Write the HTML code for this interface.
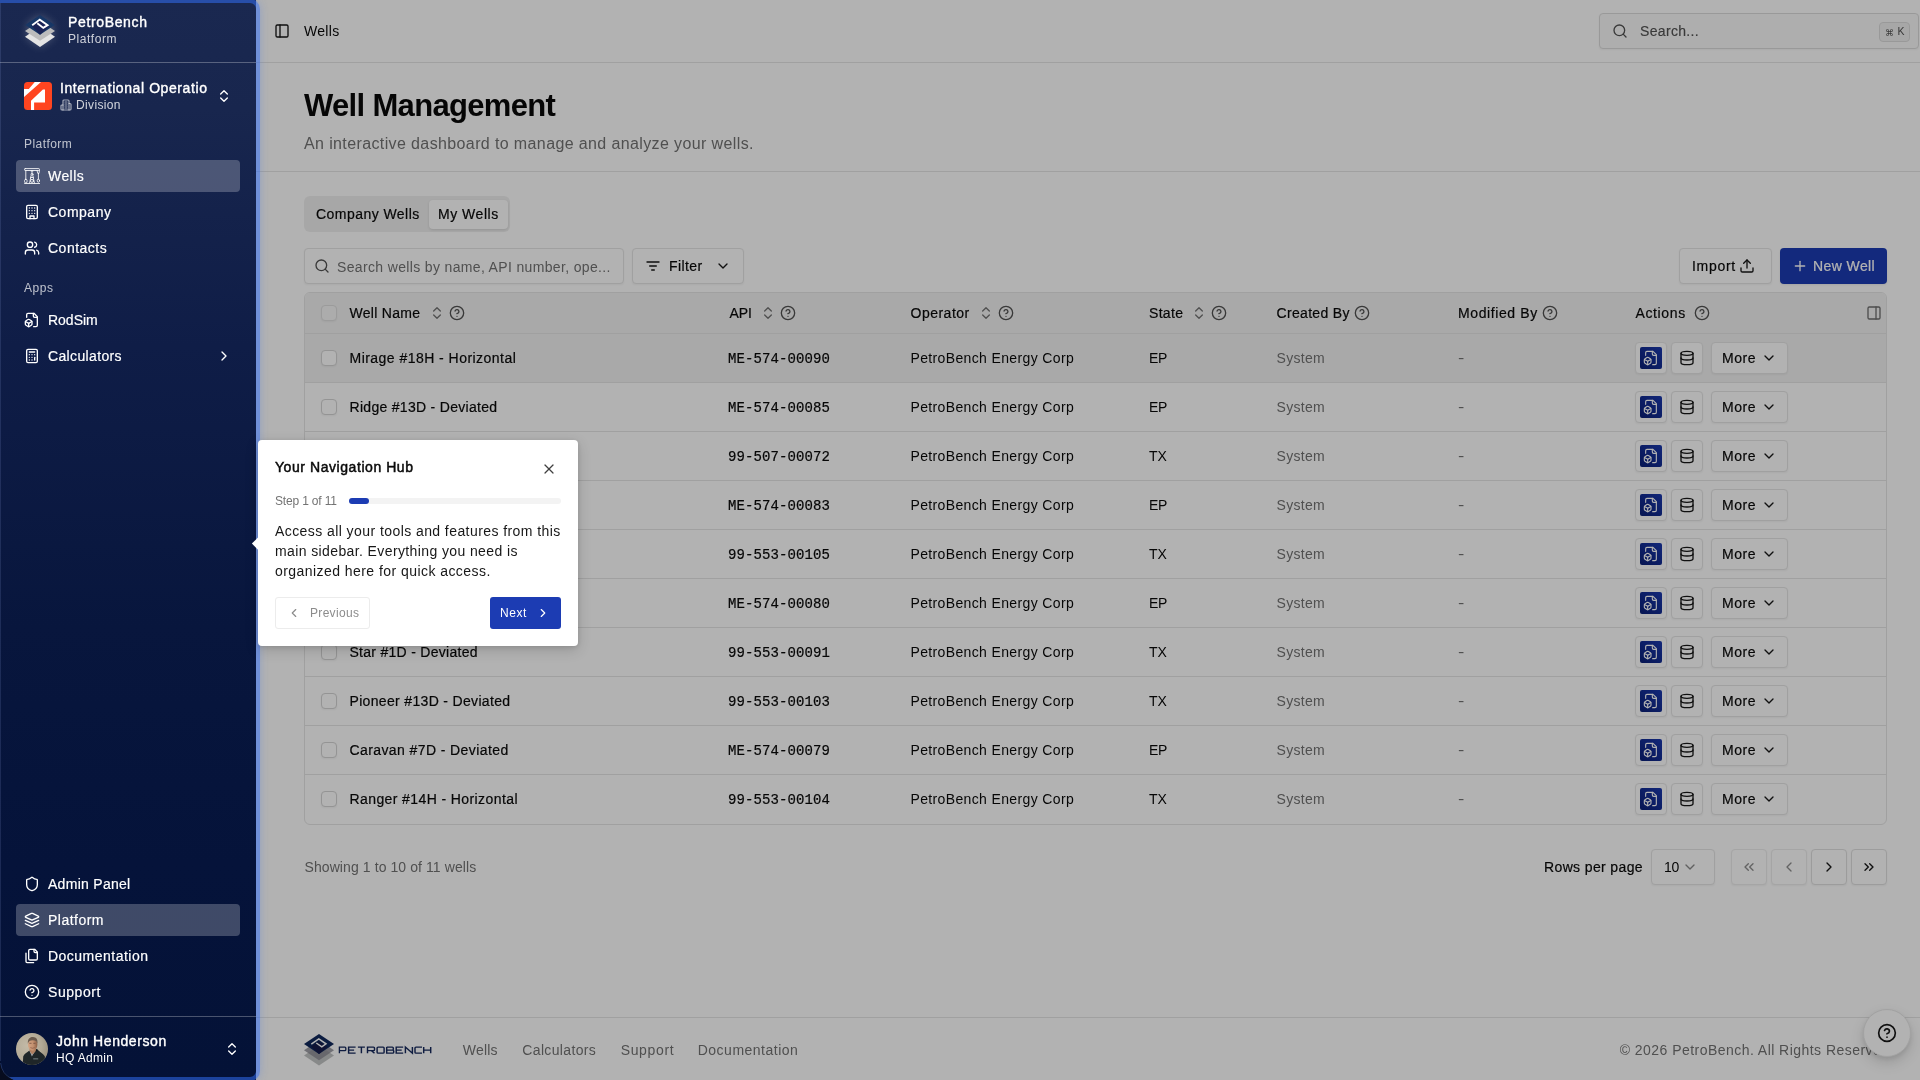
<!DOCTYPE html>
<html lang="en">
<head>
<meta charset="utf-8">
<title>PetroBench - Wells</title>
<style>
*{box-sizing:border-box;margin:0;padding:0}
html,body{width:1920px;height:1080px;overflow:hidden;background:#fff}
body{font-family:"Liberation Sans",sans-serif;color:#0a0a0a;position:relative;font-size:14px}
.abs{position:absolute}
.t{position:absolute;white-space:nowrap;line-height:1}
.t,.th,.c{opacity:.999}
svg{display:block}
.ic{position:absolute;fill:none;stroke:currentColor;stroke-width:2;stroke-linecap:round;stroke-linejoin:round}
/* ---------- sidebar ---------- */
#sb{position:absolute;left:0;top:0;width:256px;height:1080px;background:linear-gradient(180deg,#1a2850 0%,#18264e 10%,#0f1d47 32%,#08163d 58%,#05133a 80%,#041237 100%);color:#fff;z-index:30}
#sb .hr{position:absolute;left:0;width:256px;height:1px;background:rgba(255,255,255,.28)}
#sb .nav{position:absolute;left:16px;width:224px;height:32px;border-radius:4px}
#sb .nav.on{background:rgba(255,255,255,.235)}
#sb .nav .ic{left:8px;top:8px;width:16px;height:16px;color:#fff}
#sb .nav .t{left:32px;top:8px;font-size:14px;line-height:16px;color:#fff;-webkit-text-stroke:.18px #fff}
#sb .lbl{font-size:12px;color:rgba(255,255,255,.72)}
/* ---------- main ---------- */
#main{position:absolute;left:0;top:0;width:1920px;height:1080px;background:#fff}
.hline{position:absolute;left:256px;width:1664px;height:1px;background:#e5e5e5}
.g{color:#737373}
.mono{font-family:"Liberation Mono",monospace}
.th{position:absolute;top:305px;font-size:14px;line-height:16px;white-space:nowrap;color:#0a0a0a;-webkit-text-stroke:.2px #0a0a0a}
.hic{position:absolute;top:305px;width:16px;height:16px;fill:none;stroke:#525252;stroke-width:2;stroke-linecap:round;stroke-linejoin:round}
.row{position:absolute;left:305px;width:1581px;height:49px;border-bottom:1px solid #e5e5e5}
.row .c{position:absolute;top:16px;font-size:14px;line-height:16px;white-space:nowrap}
.cb{position:absolute;left:16px;top:16px;width:16px;height:16px;border:1px solid #d4d4d4;border-radius:4px;background:#fff;box-shadow:0 1px 2px rgba(0,0,0,.05)}
.ab{position:absolute;top:8px;height:32px;border:1px solid #e5e5e5;border-radius:4px;background:#fff;box-shadow:0 1px 2px rgba(0,0,0,.05)}

.btn{position:absolute;border:1px solid #e5e5e5;border-radius:4px;background:#fff;box-shadow:0 1px 2px rgba(0,0,0,.05)}
/* ---------- overlay ---------- */
#dim{position:absolute;left:0;top:0;width:1920px;height:1080px;background:rgba(0,0,0,.302);z-index:20;pointer-events:none}
#ring{position:absolute;left:-14px;top:-1px;width:274px;height:1082px;border:4px solid rgba(51,113,251,.52);border-radius:10px;box-shadow:0 0 9px rgba(70,120,240,.30);z-index:40;pointer-events:none}
#pop{position:absolute;left:258px;top:440px;width:320px;height:206px;background:#fff;border-radius:4px;z-index:50;box-shadow:0 4px 14px rgba(0,0,0,.16),0 1px 4px rgba(0,0,0,.10)}
</style>
</head>
<body>

<!-- ================= MAIN ================= -->
<div id="main">
<svg class="ic" style="left:274px;top:23px;width:16px;height:16px;color:#171717" viewBox="0 0 24 24"><rect width="18" height="18" x="3" y="3" rx="2"/><path d="M9 3v18"/></svg>
<div class="t" style="left:304px;top:23px;font-size:14px;line-height:16px;letter-spacing:0.308px">Wells</div>
<div class="abs" style="left:1599px;top:13px;width:320px;height:36px;border:1px solid #dcdcdc;border-radius:4px;background:#fafafa;box-shadow:0 1px 2px rgba(0,0,0,.05)"></div>
<svg class="ic" style="left:1612px;top:23px;width:16px;height:16px;color:#525252" viewBox="0 0 24 24"><circle cx="11" cy="11" r="8"/><path d="m21 21-4.3-4.3"/></svg>
<div class="t" style="left:1640px;top:23px;font-size:14px;line-height:16px;color:#525252;-webkit-text-stroke:.15px #525252;letter-spacing:0.334px">Search...</div>
<div class="abs" style="left:1879px;top:22px;width:31px;height:20px;border:1px solid #dcdcdc;border-radius:4px;background:#f0f0f0"></div>
<div class="t" style="left:1885px;top:26.5px;font-size:9px;line-height:12px;color:#525252">&#8984;</div>
<div class="t" style="left:1897.5px;top:25px;font-size:10.5px;line-height:12px;color:#525252">K</div>
<div class="hline" style="top:62px"></div>
<div class="t" style="left:304px;top:90px;font-size:31px;line-height:32px;font-weight:bold;color:#0a0a0a;letter-spacing:-0.669px">Well Management</div>
<div class="t g" style="left:304px;top:135px;font-size:16px;line-height:18px;letter-spacing:0.380px">An interactive dashboard to manage and analyze your wells.</div>
<div class="hline" style="top:171px"></div>
<div class="abs" style="left:304px;top:196px;width:206px;height:36px;border-radius:6px;background:#f0f0f0"></div>
<div class="abs" style="left:429px;top:200px;width:79px;height:29px;border-radius:4px;background:#fff;box-shadow:0 1px 3px rgba(0,0,0,.12)"></div>
<div class="t" style="left:316px;top:206px;font-size:14px;line-height:16px;-webkit-text-stroke:.2px #0a0a0a;letter-spacing:0.452px">Company Wells</div>
<div class="t" style="left:438px;top:206px;font-size:14px;line-height:16px;-webkit-text-stroke:.2px #0a0a0a;letter-spacing:0.524px">My Wells</div>
<div class="btn" style="left:304px;top:248px;width:320px;height:36px"></div>
<svg class="ic" style="left:314px;top:258px;width:16px;height:16px;color:#525252" viewBox="0 0 24 24"><circle cx="11" cy="11" r="8"/><path d="m21 21-4.3-4.3"/></svg>
<div class="t g" style="left:337px;top:259px;font-size:14px;line-height:16px;letter-spacing:0.348px">Search wells by name, API number, ope...</div>
<div class="btn" style="left:632px;top:248px;width:112px;height:36px"></div>
<svg class="ic" style="left:645px;top:258px;width:16px;height:16px;color:#171717" viewBox="0 0 24 24"><path d="M3 6h18"/><path d="M7 12h10"/><path d="M10 18h4"/></svg>
<div class="t" style="left:669px;top:258px;font-size:14px;line-height:16px;-webkit-text-stroke:.2px #0a0a0a;letter-spacing:0.415px">Filter</div>
<svg class="ic" style="left:715px;top:258px;width:16px;height:16px;color:#171717" viewBox="0 0 24 24"><path d="m6 9 6 6 6-6"/></svg>
<div class="btn" style="left:1679px;top:248px;width:93px;height:36px"></div>
<div class="t" style="left:1692px;top:258px;font-size:14px;line-height:16px;-webkit-text-stroke:.2px #0a0a0a;letter-spacing:0.703px">Import</div>
<svg class="ic" style="left:1739px;top:258px;width:16px;height:16px;color:#171717" viewBox="0 0 24 24"><path d="M21 15v4a2 2 0 0 1-2 2H5a2 2 0 0 1-2-2v-4"/><polyline points="17 8 12 3 7 8"/><line x1="12" x2="12" y1="3" y2="15"/></svg>
<div class="abs" style="left:1780px;top:248px;width:107px;height:36px;border-radius:4px;background:#1c3cb3;box-shadow:0 1px 2px rgba(0,0,0,.08)"></div>
<svg class="ic" style="left:1792px;top:258px;width:16px;height:16px;color:#fff" viewBox="0 0 24 24"><path d="M5 12h14"/><path d="M12 5v14"/></svg>
<div class="t" style="left:1813px;top:258px;font-size:14px;line-height:16px;color:#fff;-webkit-text-stroke:.2px #fff;letter-spacing:0.404px">New Well</div>
<div class="abs" style="left:304px;top:292px;width:1583px;height:533px;border:1px solid #e5e5e5;border-radius:6px;background:#fff"></div>
<div class="abs" style="left:305px;top:293px;width:1581px;height:41px;background:#f3f3f3;border-bottom:1px solid #e5e5e5;border-radius:5px 5px 0 0"></div>
<div class="cb" style="left:321px;top:305px;background:#f6f6f6;border-color:#dedede"></div>
<div class="th" style="left:349.5px;letter-spacing:0.281px">Well Name</div>
<svg class="hic" style="left:429px;stroke:#737373" viewBox="0 0 24 24"><path d="m7 15 5 5 5-5"/><path d="m7 9 5-5 5 5"/></svg>
<svg class="hic" style="left:449px" viewBox="0 0 24 24"><circle cx="12" cy="12" r="10"/><path d="M9.090 9a3 3 0 0 1 5.830 1c0 2-3 3-3 3"/><path d="M12 17h.01"/></svg>
<div class="th" style="left:729.5px;letter-spacing:-0.064px">API</div>
<svg class="hic" style="left:760px;stroke:#737373" viewBox="0 0 24 24"><path d="m7 15 5 5 5-5"/><path d="m7 9 5-5 5 5"/></svg>
<svg class="hic" style="left:780px" viewBox="0 0 24 24"><circle cx="12" cy="12" r="10"/><path d="M9.090 9a3 3 0 0 1 5.830 1c0 2-3 3-3 3"/><path d="M12 17h.01"/></svg>
<div class="th" style="left:910.5px;letter-spacing:0.493px">Operator</div>
<svg class="hic" style="left:977.75px;stroke:#737373" viewBox="0 0 24 24"><path d="m7 15 5 5 5-5"/><path d="m7 9 5-5 5 5"/></svg>
<svg class="hic" style="left:998px" viewBox="0 0 24 24"><circle cx="12" cy="12" r="10"/><path d="M9.090 9a3 3 0 0 1 5.830 1c0 2-3 3-3 3"/><path d="M12 17h.01"/></svg>
<div class="th" style="left:1149px;letter-spacing:0.312px">State</div>
<svg class="hic" style="left:1190.75px;stroke:#737373" viewBox="0 0 24 24"><path d="m7 15 5 5 5-5"/><path d="m7 9 5-5 5 5"/></svg>
<svg class="hic" style="left:1211px" viewBox="0 0 24 24"><circle cx="12" cy="12" r="10"/><path d="M9.090 9a3 3 0 0 1 5.830 1c0 2-3 3-3 3"/><path d="M12 17h.01"/></svg>
<div class="th" style="left:1276.5px;letter-spacing:0.323px">Created By</div>
<svg class="hic" style="left:1354px" viewBox="0 0 24 24"><circle cx="12" cy="12" r="10"/><path d="M9.090 9a3 3 0 0 1 5.830 1c0 2-3 3-3 3"/><path d="M12 17h.01"/></svg>
<div class="th" style="left:1458px;letter-spacing:0.604px">Modified By</div>
<svg class="hic" style="left:1542px" viewBox="0 0 24 24"><circle cx="12" cy="12" r="10"/><path d="M9.090 9a3 3 0 0 1 5.830 1c0 2-3 3-3 3"/><path d="M12 17h.01"/></svg>
<div class="th" style="left:1635.5px;letter-spacing:0.630px">Actions</div>
<svg class="hic" style="left:1694px" viewBox="0 0 24 24"><circle cx="12" cy="12" r="10"/><path d="M9.090 9a3 3 0 0 1 5.830 1c0 2-3 3-3 3"/><path d="M12 17h.01"/></svg>
<svg class="hic" style="left:1866px;stroke:#6f6f6f" viewBox="0 0 24 24"><rect width="18" height="18" x="3" y="3" rx="2"/><path d="M15 3v18"/></svg>
<div class="row" style="top:334px;background:#f3f3f3">
<div class="cb"></div>
<div class="c" style="left:44.5px;-webkit-text-stroke:.2px #0a0a0a;letter-spacing:0.464px">Mirage #18H - Horizontal</div>
<div class="c mono" style="left:423px;top:16.5px;-webkit-text-stroke:.22px #0a0a0a;letter-spacing:0.097px">ME-574-00090</div>
<div class="c" style="left:605.5px;letter-spacing:0.360px">PetroBench Energy Corp</div>
<div class="c" style="left:844px;letter-spacing:-0.300px">EP</div>
<div class="c g" style="left:971.5px;letter-spacing:0.303px">System</div>
<div class="c g" style="left:1153px;transform:scaleX(1.35);transform-origin:left">-</div>
<div class="ab" style="left:1330px;width:32px"><div class="abs" style="left:4px;top:4px;width:22px;height:22px;border-radius:2px;background:linear-gradient(45deg,#0a1f76,#1a38ae)"></div><svg class="ic" style="left:7px;top:7px;width:16px;height:16px;color:#fff;stroke-width:1.7" viewBox="0 0 24 24"><path d="M14.5 22H18a2 2 0 0 0 2-2V7l-5-5H6a2 2 0 0 0-2 2v4"/><path d="M14 2v4a2 2 0 0 0 2 2h4"/><path d="M3 13.1a2 2 0 0 0-1 1.76v3.24a2 2 0 0 0 .97 1.78L6 21.7a2 2 0 0 0 2.03.01L11 19.9a2 2 0 0 0 1-1.76V14.9a2 2 0 0 0-.97-1.78L8 11.3a2 2 0 0 0-2.03-.01Z"/><path d="M7 17v5"/><path d="M11.7 14.2 7 17l-4.7-2.8"/></svg></div>
<div class="ab" style="left:1366px;width:32px"><svg class="ic" style="left:7px;top:7px;width:16px;height:16px;color:#171717" viewBox="0 0 24 24"><ellipse cx="12" cy="5" rx="9" ry="3"/><path d="M3 5V19A9 3 0 0 0 21 19V5"/><path d="M3 12A9 3 0 0 0 21 12"/></svg></div>
<div class="ab" style="left:1406px;width:77px"><div class="t" style="left:10px;top:7px;font-size:14px;line-height:16px;-webkit-text-stroke:.2px #0a0a0a;letter-spacing:0.531px">More</div><svg class="ic" style="left:49px;top:7px;width:16px;height:16px;color:#171717" viewBox="0 0 24 24"><path d="m6 9 6 6 6-6"/></svg></div>
</div>
<div class="row" style="top:383px">
<div class="cb"></div>
<div class="c" style="left:44.5px;-webkit-text-stroke:.2px #0a0a0a;letter-spacing:0.298px">Ridge #13D - Deviated</div>
<div class="c mono" style="left:423px;top:16.5px;-webkit-text-stroke:.22px #0a0a0a;letter-spacing:0.097px">ME-574-00085</div>
<div class="c" style="left:605.5px;letter-spacing:0.360px">PetroBench Energy Corp</div>
<div class="c" style="left:844px;letter-spacing:-0.300px">EP</div>
<div class="c g" style="left:971.5px;letter-spacing:0.303px">System</div>
<div class="c g" style="left:1153px;transform:scaleX(1.35);transform-origin:left">-</div>
<div class="ab" style="left:1330px;width:32px"><div class="abs" style="left:4px;top:4px;width:22px;height:22px;border-radius:2px;background:linear-gradient(45deg,#0a1f76,#1a38ae)"></div><svg class="ic" style="left:7px;top:7px;width:16px;height:16px;color:#fff;stroke-width:1.7" viewBox="0 0 24 24"><path d="M14.5 22H18a2 2 0 0 0 2-2V7l-5-5H6a2 2 0 0 0-2 2v4"/><path d="M14 2v4a2 2 0 0 0 2 2h4"/><path d="M3 13.1a2 2 0 0 0-1 1.76v3.24a2 2 0 0 0 .97 1.78L6 21.7a2 2 0 0 0 2.03.01L11 19.9a2 2 0 0 0 1-1.76V14.9a2 2 0 0 0-.97-1.78L8 11.3a2 2 0 0 0-2.03-.01Z"/><path d="M7 17v5"/><path d="M11.7 14.2 7 17l-4.7-2.8"/></svg></div>
<div class="ab" style="left:1366px;width:32px"><svg class="ic" style="left:7px;top:7px;width:16px;height:16px;color:#171717" viewBox="0 0 24 24"><ellipse cx="12" cy="5" rx="9" ry="3"/><path d="M3 5V19A9 3 0 0 0 21 19V5"/><path d="M3 12A9 3 0 0 0 21 12"/></svg></div>
<div class="ab" style="left:1406px;width:77px"><div class="t" style="left:10px;top:7px;font-size:14px;line-height:16px;-webkit-text-stroke:.2px #0a0a0a;letter-spacing:0.531px">More</div><svg class="ic" style="left:49px;top:7px;width:16px;height:16px;color:#171717" viewBox="0 0 24 24"><path d="m6 9 6 6 6-6"/></svg></div>
</div>
<div class="row" style="top:432px">
<div class="cb"></div>
<div class="c" style="left:44.5px;-webkit-text-stroke:.2px #0a0a0a;letter-spacing:0.673px">Frontier #2V - Vertical</div>
<div class="c mono" style="left:423px;top:16.5px;-webkit-text-stroke:.22px #0a0a0a;letter-spacing:0.097px">99-507-00072</div>
<div class="c" style="left:605.5px;letter-spacing:0.360px">PetroBench Energy Corp</div>
<div class="c" style="left:844px;letter-spacing:0.009px">TX</div>
<div class="c g" style="left:971.5px;letter-spacing:0.303px">System</div>
<div class="c g" style="left:1153px;transform:scaleX(1.35);transform-origin:left">-</div>
<div class="ab" style="left:1330px;width:32px"><div class="abs" style="left:4px;top:4px;width:22px;height:22px;border-radius:2px;background:linear-gradient(45deg,#0a1f76,#1a38ae)"></div><svg class="ic" style="left:7px;top:7px;width:16px;height:16px;color:#fff;stroke-width:1.7" viewBox="0 0 24 24"><path d="M14.5 22H18a2 2 0 0 0 2-2V7l-5-5H6a2 2 0 0 0-2 2v4"/><path d="M14 2v4a2 2 0 0 0 2 2h4"/><path d="M3 13.1a2 2 0 0 0-1 1.76v3.24a2 2 0 0 0 .97 1.78L6 21.7a2 2 0 0 0 2.03.01L11 19.9a2 2 0 0 0 1-1.76V14.9a2 2 0 0 0-.97-1.78L8 11.3a2 2 0 0 0-2.03-.01Z"/><path d="M7 17v5"/><path d="M11.7 14.2 7 17l-4.7-2.8"/></svg></div>
<div class="ab" style="left:1366px;width:32px"><svg class="ic" style="left:7px;top:7px;width:16px;height:16px;color:#171717" viewBox="0 0 24 24"><ellipse cx="12" cy="5" rx="9" ry="3"/><path d="M3 5V19A9 3 0 0 0 21 19V5"/><path d="M3 12A9 3 0 0 0 21 12"/></svg></div>
<div class="ab" style="left:1406px;width:77px"><div class="t" style="left:10px;top:7px;font-size:14px;line-height:16px;-webkit-text-stroke:.2px #0a0a0a;letter-spacing:0.531px">More</div><svg class="ic" style="left:49px;top:7px;width:16px;height:16px;color:#171717" viewBox="0 0 24 24"><path d="m6 9 6 6 6-6"/></svg></div>
</div>
<div class="row" style="top:481px">
<div class="cb"></div>
<div class="c" style="left:44.5px;-webkit-text-stroke:.2px #0a0a0a;letter-spacing:0.441px">Canyon #11H - Horizontal</div>
<div class="c mono" style="left:423px;top:16.5px;-webkit-text-stroke:.22px #0a0a0a;letter-spacing:0.097px">ME-574-00083</div>
<div class="c" style="left:605.5px;letter-spacing:0.360px">PetroBench Energy Corp</div>
<div class="c" style="left:844px;letter-spacing:-0.300px">EP</div>
<div class="c g" style="left:971.5px;letter-spacing:0.303px">System</div>
<div class="c g" style="left:1153px;transform:scaleX(1.35);transform-origin:left">-</div>
<div class="ab" style="left:1330px;width:32px"><div class="abs" style="left:4px;top:4px;width:22px;height:22px;border-radius:2px;background:linear-gradient(45deg,#0a1f76,#1a38ae)"></div><svg class="ic" style="left:7px;top:7px;width:16px;height:16px;color:#fff;stroke-width:1.7" viewBox="0 0 24 24"><path d="M14.5 22H18a2 2 0 0 0 2-2V7l-5-5H6a2 2 0 0 0-2 2v4"/><path d="M14 2v4a2 2 0 0 0 2 2h4"/><path d="M3 13.1a2 2 0 0 0-1 1.76v3.24a2 2 0 0 0 .97 1.78L6 21.7a2 2 0 0 0 2.03.01L11 19.9a2 2 0 0 0 1-1.76V14.9a2 2 0 0 0-.97-1.78L8 11.3a2 2 0 0 0-2.03-.01Z"/><path d="M7 17v5"/><path d="M11.7 14.2 7 17l-4.7-2.8"/></svg></div>
<div class="ab" style="left:1366px;width:32px"><svg class="ic" style="left:7px;top:7px;width:16px;height:16px;color:#171717" viewBox="0 0 24 24"><ellipse cx="12" cy="5" rx="9" ry="3"/><path d="M3 5V19A9 3 0 0 0 21 19V5"/><path d="M3 12A9 3 0 0 0 21 12"/></svg></div>
<div class="ab" style="left:1406px;width:77px"><div class="t" style="left:10px;top:7px;font-size:14px;line-height:16px;-webkit-text-stroke:.2px #0a0a0a;letter-spacing:0.531px">More</div><svg class="ic" style="left:49px;top:7px;width:16px;height:16px;color:#171717" viewBox="0 0 24 24"><path d="m6 9 6 6 6-6"/></svg></div>
</div>
<div class="row" style="top:530px">
<div class="cb"></div>
<div class="c" style="left:44.5px;-webkit-text-stroke:.2px #0a0a0a;letter-spacing:0.271px">Summit #15D - Deviated</div>
<div class="c mono" style="left:423px;top:16.5px;-webkit-text-stroke:.22px #0a0a0a;letter-spacing:0.097px">99-553-00105</div>
<div class="c" style="left:605.5px;letter-spacing:0.360px">PetroBench Energy Corp</div>
<div class="c" style="left:844px;letter-spacing:0.009px">TX</div>
<div class="c g" style="left:971.5px;letter-spacing:0.303px">System</div>
<div class="c g" style="left:1153px;transform:scaleX(1.35);transform-origin:left">-</div>
<div class="ab" style="left:1330px;width:32px"><div class="abs" style="left:4px;top:4px;width:22px;height:22px;border-radius:2px;background:linear-gradient(45deg,#0a1f76,#1a38ae)"></div><svg class="ic" style="left:7px;top:7px;width:16px;height:16px;color:#fff;stroke-width:1.7" viewBox="0 0 24 24"><path d="M14.5 22H18a2 2 0 0 0 2-2V7l-5-5H6a2 2 0 0 0-2 2v4"/><path d="M14 2v4a2 2 0 0 0 2 2h4"/><path d="M3 13.1a2 2 0 0 0-1 1.76v3.24a2 2 0 0 0 .97 1.78L6 21.7a2 2 0 0 0 2.03.01L11 19.9a2 2 0 0 0 1-1.76V14.9a2 2 0 0 0-.97-1.78L8 11.3a2 2 0 0 0-2.03-.01Z"/><path d="M7 17v5"/><path d="M11.7 14.2 7 17l-4.7-2.8"/></svg></div>
<div class="ab" style="left:1366px;width:32px"><svg class="ic" style="left:7px;top:7px;width:16px;height:16px;color:#171717" viewBox="0 0 24 24"><ellipse cx="12" cy="5" rx="9" ry="3"/><path d="M3 5V19A9 3 0 0 0 21 19V5"/><path d="M3 12A9 3 0 0 0 21 12"/></svg></div>
<div class="ab" style="left:1406px;width:77px"><div class="t" style="left:10px;top:7px;font-size:14px;line-height:16px;-webkit-text-stroke:.2px #0a0a0a;letter-spacing:0.531px">More</div><svg class="ic" style="left:49px;top:7px;width:16px;height:16px;color:#171717" viewBox="0 0 24 24"><path d="m6 9 6 6 6-6"/></svg></div>
</div>
<div class="row" style="top:579px">
<div class="cb"></div>
<div class="c" style="left:44.5px;-webkit-text-stroke:.2px #0a0a0a;letter-spacing:0.600px">Prairie #8V - Vertical</div>
<div class="c mono" style="left:423px;top:16.5px;-webkit-text-stroke:.22px #0a0a0a;letter-spacing:0.097px">ME-574-00080</div>
<div class="c" style="left:605.5px;letter-spacing:0.360px">PetroBench Energy Corp</div>
<div class="c" style="left:844px;letter-spacing:-0.300px">EP</div>
<div class="c g" style="left:971.5px;letter-spacing:0.303px">System</div>
<div class="c g" style="left:1153px;transform:scaleX(1.35);transform-origin:left">-</div>
<div class="ab" style="left:1330px;width:32px"><div class="abs" style="left:4px;top:4px;width:22px;height:22px;border-radius:2px;background:linear-gradient(45deg,#0a1f76,#1a38ae)"></div><svg class="ic" style="left:7px;top:7px;width:16px;height:16px;color:#fff;stroke-width:1.7" viewBox="0 0 24 24"><path d="M14.5 22H18a2 2 0 0 0 2-2V7l-5-5H6a2 2 0 0 0-2 2v4"/><path d="M14 2v4a2 2 0 0 0 2 2h4"/><path d="M3 13.1a2 2 0 0 0-1 1.76v3.24a2 2 0 0 0 .97 1.78L6 21.7a2 2 0 0 0 2.03.01L11 19.9a2 2 0 0 0 1-1.76V14.9a2 2 0 0 0-.97-1.78L8 11.3a2 2 0 0 0-2.03-.01Z"/><path d="M7 17v5"/><path d="M11.7 14.2 7 17l-4.7-2.8"/></svg></div>
<div class="ab" style="left:1366px;width:32px"><svg class="ic" style="left:7px;top:7px;width:16px;height:16px;color:#171717" viewBox="0 0 24 24"><ellipse cx="12" cy="5" rx="9" ry="3"/><path d="M3 5V19A9 3 0 0 0 21 19V5"/><path d="M3 12A9 3 0 0 0 21 12"/></svg></div>
<div class="ab" style="left:1406px;width:77px"><div class="t" style="left:10px;top:7px;font-size:14px;line-height:16px;-webkit-text-stroke:.2px #0a0a0a;letter-spacing:0.531px">More</div><svg class="ic" style="left:49px;top:7px;width:16px;height:16px;color:#171717" viewBox="0 0 24 24"><path d="m6 9 6 6 6-6"/></svg></div>
</div>
<div class="row" style="top:628px">
<div class="cb"></div>
<div class="c" style="left:44.5px;-webkit-text-stroke:.2px #0a0a0a;letter-spacing:0.280px">Star #1D - Deviated</div>
<div class="c mono" style="left:423px;top:16.5px;-webkit-text-stroke:.22px #0a0a0a;letter-spacing:0.097px">99-553-00091</div>
<div class="c" style="left:605.5px;letter-spacing:0.360px">PetroBench Energy Corp</div>
<div class="c" style="left:844px;letter-spacing:0.009px">TX</div>
<div class="c g" style="left:971.5px;letter-spacing:0.303px">System</div>
<div class="c g" style="left:1153px;transform:scaleX(1.35);transform-origin:left">-</div>
<div class="ab" style="left:1330px;width:32px"><div class="abs" style="left:4px;top:4px;width:22px;height:22px;border-radius:2px;background:linear-gradient(45deg,#0a1f76,#1a38ae)"></div><svg class="ic" style="left:7px;top:7px;width:16px;height:16px;color:#fff;stroke-width:1.7" viewBox="0 0 24 24"><path d="M14.5 22H18a2 2 0 0 0 2-2V7l-5-5H6a2 2 0 0 0-2 2v4"/><path d="M14 2v4a2 2 0 0 0 2 2h4"/><path d="M3 13.1a2 2 0 0 0-1 1.76v3.24a2 2 0 0 0 .97 1.78L6 21.7a2 2 0 0 0 2.03.01L11 19.9a2 2 0 0 0 1-1.76V14.9a2 2 0 0 0-.97-1.78L8 11.3a2 2 0 0 0-2.03-.01Z"/><path d="M7 17v5"/><path d="M11.7 14.2 7 17l-4.7-2.8"/></svg></div>
<div class="ab" style="left:1366px;width:32px"><svg class="ic" style="left:7px;top:7px;width:16px;height:16px;color:#171717" viewBox="0 0 24 24"><ellipse cx="12" cy="5" rx="9" ry="3"/><path d="M3 5V19A9 3 0 0 0 21 19V5"/><path d="M3 12A9 3 0 0 0 21 12"/></svg></div>
<div class="ab" style="left:1406px;width:77px"><div class="t" style="left:10px;top:7px;font-size:14px;line-height:16px;-webkit-text-stroke:.2px #0a0a0a;letter-spacing:0.531px">More</div><svg class="ic" style="left:49px;top:7px;width:16px;height:16px;color:#171717" viewBox="0 0 24 24"><path d="m6 9 6 6 6-6"/></svg></div>
</div>
<div class="row" style="top:677px">
<div class="cb"></div>
<div class="c" style="left:44.5px;-webkit-text-stroke:.2px #0a0a0a;letter-spacing:0.331px">Pioneer #13D - Deviated</div>
<div class="c mono" style="left:423px;top:16.5px;-webkit-text-stroke:.22px #0a0a0a;letter-spacing:0.097px">99-553-00103</div>
<div class="c" style="left:605.5px;letter-spacing:0.360px">PetroBench Energy Corp</div>
<div class="c" style="left:844px;letter-spacing:0.009px">TX</div>
<div class="c g" style="left:971.5px;letter-spacing:0.303px">System</div>
<div class="c g" style="left:1153px;transform:scaleX(1.35);transform-origin:left">-</div>
<div class="ab" style="left:1330px;width:32px"><div class="abs" style="left:4px;top:4px;width:22px;height:22px;border-radius:2px;background:linear-gradient(45deg,#0a1f76,#1a38ae)"></div><svg class="ic" style="left:7px;top:7px;width:16px;height:16px;color:#fff;stroke-width:1.7" viewBox="0 0 24 24"><path d="M14.5 22H18a2 2 0 0 0 2-2V7l-5-5H6a2 2 0 0 0-2 2v4"/><path d="M14 2v4a2 2 0 0 0 2 2h4"/><path d="M3 13.1a2 2 0 0 0-1 1.76v3.24a2 2 0 0 0 .97 1.78L6 21.7a2 2 0 0 0 2.03.01L11 19.9a2 2 0 0 0 1-1.76V14.9a2 2 0 0 0-.97-1.78L8 11.3a2 2 0 0 0-2.03-.01Z"/><path d="M7 17v5"/><path d="M11.7 14.2 7 17l-4.7-2.8"/></svg></div>
<div class="ab" style="left:1366px;width:32px"><svg class="ic" style="left:7px;top:7px;width:16px;height:16px;color:#171717" viewBox="0 0 24 24"><ellipse cx="12" cy="5" rx="9" ry="3"/><path d="M3 5V19A9 3 0 0 0 21 19V5"/><path d="M3 12A9 3 0 0 0 21 12"/></svg></div>
<div class="ab" style="left:1406px;width:77px"><div class="t" style="left:10px;top:7px;font-size:14px;line-height:16px;-webkit-text-stroke:.2px #0a0a0a;letter-spacing:0.531px">More</div><svg class="ic" style="left:49px;top:7px;width:16px;height:16px;color:#171717" viewBox="0 0 24 24"><path d="m6 9 6 6 6-6"/></svg></div>
</div>
<div class="row" style="top:726px">
<div class="cb"></div>
<div class="c" style="left:44.5px;-webkit-text-stroke:.2px #0a0a0a;letter-spacing:0.405px">Caravan #7D - Deviated</div>
<div class="c mono" style="left:423px;top:16.5px;-webkit-text-stroke:.22px #0a0a0a;letter-spacing:0.097px">ME-574-00079</div>
<div class="c" style="left:605.5px;letter-spacing:0.360px">PetroBench Energy Corp</div>
<div class="c" style="left:844px;letter-spacing:-0.300px">EP</div>
<div class="c g" style="left:971.5px;letter-spacing:0.303px">System</div>
<div class="c g" style="left:1153px;transform:scaleX(1.35);transform-origin:left">-</div>
<div class="ab" style="left:1330px;width:32px"><div class="abs" style="left:4px;top:4px;width:22px;height:22px;border-radius:2px;background:linear-gradient(45deg,#0a1f76,#1a38ae)"></div><svg class="ic" style="left:7px;top:7px;width:16px;height:16px;color:#fff;stroke-width:1.7" viewBox="0 0 24 24"><path d="M14.5 22H18a2 2 0 0 0 2-2V7l-5-5H6a2 2 0 0 0-2 2v4"/><path d="M14 2v4a2 2 0 0 0 2 2h4"/><path d="M3 13.1a2 2 0 0 0-1 1.76v3.24a2 2 0 0 0 .97 1.78L6 21.7a2 2 0 0 0 2.03.01L11 19.9a2 2 0 0 0 1-1.76V14.9a2 2 0 0 0-.97-1.78L8 11.3a2 2 0 0 0-2.03-.01Z"/><path d="M7 17v5"/><path d="M11.7 14.2 7 17l-4.7-2.8"/></svg></div>
<div class="ab" style="left:1366px;width:32px"><svg class="ic" style="left:7px;top:7px;width:16px;height:16px;color:#171717" viewBox="0 0 24 24"><ellipse cx="12" cy="5" rx="9" ry="3"/><path d="M3 5V19A9 3 0 0 0 21 19V5"/><path d="M3 12A9 3 0 0 0 21 12"/></svg></div>
<div class="ab" style="left:1406px;width:77px"><div class="t" style="left:10px;top:7px;font-size:14px;line-height:16px;-webkit-text-stroke:.2px #0a0a0a;letter-spacing:0.531px">More</div><svg class="ic" style="left:49px;top:7px;width:16px;height:16px;color:#171717" viewBox="0 0 24 24"><path d="m6 9 6 6 6-6"/></svg></div>
</div>
<div class="row" style="top:775px;border-bottom:none">
<div class="cb"></div>
<div class="c" style="left:44.5px;-webkit-text-stroke:.2px #0a0a0a;letter-spacing:0.402px">Ranger #14H - Horizontal</div>
<div class="c mono" style="left:423px;top:16.5px;-webkit-text-stroke:.22px #0a0a0a;letter-spacing:0.097px">99-553-00104</div>
<div class="c" style="left:605.5px;letter-spacing:0.360px">PetroBench Energy Corp</div>
<div class="c" style="left:844px;letter-spacing:0.009px">TX</div>
<div class="c g" style="left:971.5px;letter-spacing:0.303px">System</div>
<div class="c g" style="left:1153px;transform:scaleX(1.35);transform-origin:left">-</div>
<div class="ab" style="left:1330px;width:32px"><div class="abs" style="left:4px;top:4px;width:22px;height:22px;border-radius:2px;background:linear-gradient(45deg,#0a1f76,#1a38ae)"></div><svg class="ic" style="left:7px;top:7px;width:16px;height:16px;color:#fff;stroke-width:1.7" viewBox="0 0 24 24"><path d="M14.5 22H18a2 2 0 0 0 2-2V7l-5-5H6a2 2 0 0 0-2 2v4"/><path d="M14 2v4a2 2 0 0 0 2 2h4"/><path d="M3 13.1a2 2 0 0 0-1 1.76v3.24a2 2 0 0 0 .97 1.78L6 21.7a2 2 0 0 0 2.03.01L11 19.9a2 2 0 0 0 1-1.76V14.9a2 2 0 0 0-.97-1.78L8 11.3a2 2 0 0 0-2.03-.01Z"/><path d="M7 17v5"/><path d="M11.7 14.2 7 17l-4.7-2.8"/></svg></div>
<div class="ab" style="left:1366px;width:32px"><svg class="ic" style="left:7px;top:7px;width:16px;height:16px;color:#171717" viewBox="0 0 24 24"><ellipse cx="12" cy="5" rx="9" ry="3"/><path d="M3 5V19A9 3 0 0 0 21 19V5"/><path d="M3 12A9 3 0 0 0 21 12"/></svg></div>
<div class="ab" style="left:1406px;width:77px"><div class="t" style="left:10px;top:7px;font-size:14px;line-height:16px;-webkit-text-stroke:.2px #0a0a0a;letter-spacing:0.531px">More</div><svg class="ic" style="left:49px;top:7px;width:16px;height:16px;color:#171717" viewBox="0 0 24 24"><path d="m6 9 6 6 6-6"/></svg></div>
</div>
<div class="t g" style="left:304.5px;top:859px;font-size:14px;line-height:16px;letter-spacing:0.088px">Showing 1 to 10 of 11 wells</div>
<div class="t" style="left:1544px;top:859px;font-size:14px;line-height:16px;-webkit-text-stroke:.2px #0a0a0a;letter-spacing:0.369px">Rows per page</div>
<div class="btn" style="left:1651px;top:849px;width:64px;height:36px"></div>
<div class="t" style="left:1664px;top:859px;font-size:14px;line-height:16px;letter-spacing:-0.300px">10</div>
<svg class="ic" style="left:1682px;top:859px;width:16px;height:16px;color:#8a8a8a" viewBox="0 0 24 24"><path d="m6 9 6 6 6-6"/></svg>
<div class="btn" style="left:1731px;top:849px;width:36px;height:36px;border-color:#ececec"></div>
<svg class="ic" style="left:1741px;top:859px;width:16px;height:16px;color:#8f8f8f" viewBox="0 0 24 24"><path d="m11 17-5-5 5-5"/><path d="m18 17-5-5 5-5"/></svg>
<div class="btn" style="left:1771px;top:849px;width:36px;height:36px;border-color:#ececec"></div>
<svg class="ic" style="left:1781px;top:859px;width:16px;height:16px;color:#8f8f8f" viewBox="0 0 24 24"><path d="m15 18-6-6 6-6"/></svg>
<div class="btn" style="left:1811px;top:849px;width:36px;height:36px;border-color:#e0e0e0"></div>
<svg class="ic" style="left:1821px;top:859px;width:16px;height:16px;color:#171717" viewBox="0 0 24 24"><path d="m9 18 6-6-6-6"/></svg>
<div class="btn" style="left:1851px;top:849px;width:36px;height:36px;border-color:#e0e0e0"></div>
<svg class="ic" style="left:1861px;top:859px;width:16px;height:16px;color:#171717" viewBox="0 0 24 24"><path d="m6 17 5-5-5-5"/><path d="m13 17 5-5-5-5"/></svg>
<div class="hline" style="top:1017px"></div>
<svg class="abs" style="left:302px;top:1030px;width:34px;height:38px" viewBox="302 1030 34 38">
<polygon points="304,1055.600 319,1045.600 334,1055.600 319,1065.600" fill="#9a9c9c" opacity=".6"/>
<polygon points="304,1050.200 319,1040.200 334,1050.200 319,1060.200" fill="#8a8a92" opacity=".8"/>
<polygon points="304,1043.900 319,1033.900 334,1043.900 319,1053.900" fill="#11295c"/>
<polygon points="311,1046.500 319,1041.500 327.500,1046.800 319,1053.900" fill="#161c4a"/>
<path d="M311.300 1044.200 318.800 1039 326 1043.800 321.800 1046.800 316.300 1043" fill="none" stroke="#fff" stroke-width="1.500"/>
</svg>
<svg class="abs" style="left:336px;top:1044px;width:100px;height:12px" viewBox="336 1044 100 12" fill="none" stroke="#16295c" stroke-width="1.450" stroke-linejoin="miter"><path transform="translate(339.4,1047.100) scale(0.914,.9)" d="M0,6.8V0H6a1,1 0 0 1 1,1V3a1,1 0 0 1 -1,1H0"/><path transform="translate(348.6,1047.100) scale(1.000,.9)" d="M7,0H0V6.8H7M0,3.4H5.5"/><path transform="translate(357.9,1047.100) scale(1.000,.9)" d="M0,0H7M3.5,0V6.8"/><path transform="translate(367.5,1047.100) scale(1.000,.9)" d="M0,6.8V0H6a1,1 0 0 1 1,1V3a1,1 0 0 1 -1,1H0M4,4L7,6.8"/><path transform="translate(377.1,1047.100) scale(1.000,.9)" d="M1,0H6a1,1 0 0 1 1,1V5.8a1,1 0 0 1 -1,1H1a1,1 0 0 1 -1,-1V1a1,1 0 0 1 1,-1Z"/><path transform="translate(386.7,1047.100) scale(1.000,.9)" d="M0,0H5.6a1,1 0 0 1 1,1V2.4a1,1 0 0 1 -1,1H0M5.6,3.4H6a1,1 0 0 1 1,1V5.8a1,1 0 0 1 -1,1H0V0"/><path transform="translate(396.2,1047.100) scale(1.000,.9)" d="M7,0H0V6.8H7M0,3.4H5.5"/><path transform="translate(405.4,1047.100) scale(1.000,.9)" d="M0,6.8V0L7,6.8V0"/><path transform="translate(415,1047.100) scale(1.000,.9)" d="M7,0H1a1,1 0 0 0 -1,1V5.8a1,1 0 0 0 1,1H7"/><path transform="translate(423.7,1047.100) scale(1.000,.9)" d="M0,0V6.8M7,0V6.8M0,3.4H7"/></svg>
<div class="t g" style="left:462.7px;top:1042px;font-size:14px;line-height:16px;letter-spacing:0.233px">Wells</div>
<div class="t g" style="left:522.3px;top:1042px;font-size:14px;line-height:16px;letter-spacing:0.347px">Calculators</div>
<div class="t g" style="left:620.7px;top:1042px;font-size:14px;line-height:16px;letter-spacing:0.642px">Support</div>
<div class="t g" style="left:697.7px;top:1042px;font-size:14px;line-height:16px;letter-spacing:0.502px">Documentation</div>
<div class="t g" style="left:1619.7px;top:1042px;font-size:14px;line-height:16px;letter-spacing:0.460px">&copy; 2026 PetroBench. All Rights Reserved.</div>
<div class="abs" style="left:1863px;top:1009px;width:48px;height:48px;border-radius:24px;background:#fff;border:1px solid #e8e8e8;box-shadow:0 6px 14px rgba(0,0,0,.14),0 2px 4px rgba(0,0,0,.08)"></div>
<svg class="ic" style="left:1877px;top:1023px;width:20px;height:20px;color:#171717" viewBox="0 0 24 24"><circle cx="12" cy="12" r="10"/><path d="M9.090 9a3 3 0 0 1 5.830 1c0 2-3 3-3 3"/><path d="M12 17h.01"/></svg>
</div>

<!-- dim overlay -->
<div id="dim"></div>

<!-- ================= SIDEBAR ================= -->
<div id="sb">
<!-- brand -->
<svg class="abs" style="left:20px;top:10px;width:40px;height:42px;filter:drop-shadow(0 0 4px rgba(255,255,255,.22))" viewBox="20 10 40 42">
  <polygon points="25,36.8 40,26.6 55,36.8 40,47.1" fill="#e4e4e4"/>
  <polygon points="25,31 40,21 55,31 40,40.8" fill="#bcbcbc"/>
  <polygon points="25.3,25.1 40,15.1 54.7,25.1 40,34.8" fill="#173766"/>
  <polygon points="31.5,25.6 40,20 49.5,26 40,34.8" fill="#1a2356"/>
  <path d="M32.2 25.2 39.8 19.6 47.6 25.1 43.3 27.9 37.3 23.3" fill="none" stroke="#fff" stroke-width="1.9" stroke-linejoin="miter"/>
</svg>
<div class="t" style="left:68px;top:15px;font-size:14px;-webkit-text-stroke:.38px #fff;letter-spacing:0.642px">PetroBench</div>
<div class="t" style="left:68px;top:33px;font-size:12px;color:rgba(255,255,255,.78);letter-spacing:0.538px">Platform</div>
<div class="hr" style="top:62px"></div>

<!-- org switcher -->
<svg class="abs" style="left:24px;top:82px;width:28px;height:28px" viewBox="0 0 28 28">
  <defs><clipPath id="oc"><rect width="28" height="28" rx="3.5"/></clipPath></defs>
  <g clip-path="url(#oc)">
    <rect width="28" height="28" fill="#ff4520"/>
    <polygon points="10.75,0 17,0 0,15 0,6.9 4.8,6.9" fill="#fff"/>
    <polygon points="7,18.75 18.9,7.5 21,7.5 21,20.6 10.1,20.6 10.1,28 7,28" fill="#fff"/>
  </g>
</svg>
<div class="t" style="left:60px;top:81px;font-size:14px;-webkit-text-stroke:.38px #fff;letter-spacing:0.586px">International Operatio</div>
<svg class="ic" style="left:60px;top:99px;width:12px;height:12px;color:rgba(255,255,255,.6);stroke-width:2.4" viewBox="0 0 24 24"><path d="M6 22V4a2 2 0 0 1 2-2h8a2 2 0 0 1 2 2v18Z"/><path d="M6 12H4a2 2 0 0 0-2 2v6a2 2 0 0 0 2 2h2"/><path d="M18 9h2a2 2 0 0 1 2 2v9a2 2 0 0 1-2 2h-2"/><path d="M10 6h4"/><path d="M10 10h4"/><path d="M10 14h4"/><path d="M10 18h4"/></svg>
<div class="t" style="left:76px;top:99px;font-size:12px;color:rgba(255,255,255,.8);letter-spacing:0.348px">Division</div>
<svg class="ic" style="left:216px;top:88px;width:16px;height:16px;color:#fff" viewBox="0 0 24 24"><path d="m7 15 5 5 5-5"/><path d="m7 9 5-5 5 5"/></svg>

<!-- group: Platform -->
<div class="t lbl" style="left:24px;top:138px;letter-spacing:0.430px">Platform</div>
<div class="nav on" style="top:160px">
  <svg class="abs" style="left:8px;top:8px;width:16px;height:16px" viewBox="0 0 16 16" fill="none" stroke="#fff" stroke-width=".85" stroke-linecap="round" stroke-linejoin="round">
    <rect x=".6" y=".6" width="14.8" height="1.9" rx=".6"/>
    <path d="M1.8 2.5V11M14.4 5.5V11.2M13 2.5l.9 3h1l.6-3"/>
    <rect x=".6" y="11.3" width="2.4" height="3.6" rx="1.1"/>
    <ellipse cx="14.4" cy="12.7" rx="1.2" ry="1.5"/>
    <path d="M7 2.9h2M8 2.9V5"/>
    <circle cx="8" cy="6.3" r="1"/>
    <path d="M7.1 7.6 5.6 15M8.9 7.6 10.4 15M6.8 9.5h2.4"/>
    <circle cx="8" cy="12.9" r="1.5"/>
    <path d="M.6 15.5h15"/>
  </svg>
  <div class="t" style="letter-spacing:0.433px">Wells</div>
</div>
<div class="nav" style="top:196px">
  <svg class="ic" viewBox="0 0 24 24"><rect width="16" height="20" x="4" y="2" rx="2" ry="2"/><path d="M9 22v-4h6v4"/><path d="M8 6h.01"/><path d="M16 6h.01"/><path d="M12 6h.01"/><path d="M12 10h.01"/><path d="M12 14h.01"/><path d="M16 10h.01"/><path d="M16 14h.01"/><path d="M8 10h.01"/><path d="M8 14h.01"/></svg>
  <div class="t" style="letter-spacing:0.505px">Company</div>
</div>
<div class="nav" style="top:232px">
  <svg class="ic" viewBox="0 0 24 24"><path d="M16 21v-2a4 4 0 0 0-4-4H6a4 4 0 0 0-4 4v2"/><circle cx="9" cy="7" r="4"/><path d="M22 21v-2a4 4 0 0 0-3-3.87"/><path d="M16 3.13a4 4 0 0 1 0 7.75"/></svg>
  <div class="t" style="letter-spacing:0.493px">Contacts</div>
</div>

<!-- group: Apps -->
<div class="t lbl" style="left:24px;top:282px;letter-spacing:0.547px">Apps</div>
<div class="nav" style="top:304px">
  <svg class="ic" viewBox="0 0 24 24"><path d="M14.5 22H18a2 2 0 0 0 2-2V7l-5-5H6a2 2 0 0 0-2 2v4"/><path d="M14 2v4a2 2 0 0 0 2 2h4"/><path d="M3 13.1a2 2 0 0 0-1 1.76v3.24a2 2 0 0 0 .97 1.78L6 21.7a2 2 0 0 0 2.03.01L11 19.9a2 2 0 0 0 1-1.76V14.9a2 2 0 0 0-.97-1.78L8 11.3a2 2 0 0 0-2.03-.01Z"/><path d="M7 17v5"/><path d="M11.7 14.2 7 17l-4.7-2.8"/></svg>
  <div class="t" style="letter-spacing:-0.019px">RodSim</div>
</div>
<div class="nav" style="top:340px">
  <svg class="ic" viewBox="0 0 24 24"><rect width="16" height="20" x="4" y="2" rx="2"/><line x1="8" x2="16" y1="6" y2="6"/><line x1="16" x2="16" y1="14" y2="18"/><path d="M16 10h.01"/><path d="M12 10h.01"/><path d="M8 10h.01"/><path d="M12 14h.01"/><path d="M8 14h.01"/><path d="M12 18h.01"/><path d="M8 18h.01"/></svg>
  <div class="t" style="letter-spacing:0.357px">Calculators</div>
  <svg class="ic" style="left:200px" viewBox="0 0 24 24"><path d="m9 18 6-6-6-6"/></svg>
</div>

<!-- bottom nav -->
<div class="nav" style="top:868px">
  <svg class="ic" viewBox="0 0 24 24"><path d="M20 13c0 5-3.5 7.5-7.66 8.950a1 1 0 0 1-.67-.010C7.500 20.500 4 18 4 13V6a1 1 0 0 1 1-1c2 0 4.500-1.200 6.240-2.720a1.170 1.170 0 0 1 1.520 0C14.510 3.810 17 5 19 5a1 1 0 0 1 1 1z"/></svg>
  <div class="t" style="letter-spacing:0.281px">Admin Panel</div>
</div>
<div class="nav on" style="top:904px">
  <svg class="ic" viewBox="0 0 24 24"><path d="m12.830 2.180a2 2 0 0 0-1.660 0L2.600 6.080a1 1 0 0 0 0 1.830l8.580 3.910a2 2 0 0 0 1.660 0l8.580-3.900a1 1 0 0 0 0-1.830Z"/><path d="m22 17.650-9.170 4.160a2 2 0 0 1-1.660 0L2 17.650"/><path d="m22 12.650-9.170 4.160a2 2 0 0 1-1.660 0L2 12.650"/></svg>
  <div class="t" style="letter-spacing:0.475px">Platform</div>
</div>
<div class="nav" style="top:940px">
  <svg class="ic" viewBox="0 0 24 24"><path d="M20 7h-3a2 2 0 0 1-2-2V2"/><path d="M9 18a2 2 0 0 1-2-2V4a2 2 0 0 1 2-2h7l4 4v10a2 2 0 0 1-2 2Z"/><path d="M3 7.600v12.800A1.600 1.600 0 0 0 4.600 22h9.800"/></svg>
  <div class="t" style="letter-spacing:0.482px">Documentation</div>
</div>
<div class="nav" style="top:976px">
  <svg class="ic" viewBox="0 0 24 24"><circle cx="12" cy="12" r="10"/><path d="M9.090 9a3 3 0 0 1 5.830 1c0 2-3 3-3 3"/><path d="M12 17h.01"/></svg>
  <div class="t" style="letter-spacing:0.567px">Support</div>
</div>

<!-- user -->
<div class="hr" style="top:1016px"></div>
<svg class="abs" style="left:16px;top:1033px;width:32px;height:32px" viewBox="0 0 32 32">
  <defs><clipPath id="av"><circle cx="16" cy="16" r="16"/></clipPath>
  <radialGradient id="avb" cx=".35" cy=".4" r=".75"><stop offset="0" stop-color="#c3baa7"/><stop offset=".6" stop-color="#b3aa96"/><stop offset="1" stop-color="#958b77"/></radialGradient>
  <linearGradient id="avf" x1="0" x2="1" y1="0" y2="0"><stop offset="0" stop-color="#d2a484"/><stop offset=".55" stop-color="#c4916f"/><stop offset="1" stop-color="#8a5e45"/></linearGradient></defs>
  <g clip-path="url(#av)">
    <rect width="32" height="32" fill="url(#avb)"/>
    <path d="M6.800 32 7.200 23.500C8 21 11 19.800 13.400 17.600L16 22.500 20.800 15.800C23 18.500 27 20.500 28.800 23.300L29.500 32Z" fill="#1f2628"/>
    <path d="M13.400 17.600 15.900 23.400 19 18Z" fill="#9aa0a6"/>
    <path d="M13.600 14.500h6.400v3.500l-3.800 3.600-2.600-3.600z" fill="#b07f60"/>
    <ellipse cx="16.700" cy="11.400" rx="4.700" ry="6.300" fill="url(#avf)"/>
    <path d="M11.900 10.800C11.500 6 13.800 3.900 17 4.100 20.300 4.200 22 6.400 21.400 10.800 20.900 8 19.600 7.200 16.800 7.200 14 7.200 12.500 8.200 11.900 10.800Z" fill="#6a5a4c"/>
    <path d="M13.300 10.300h2.200M17.300 10.300h2.200" stroke="#6b4a3a" stroke-width=".9" opacity=".8"/>
    <path d="M14.300 14.600q2.200 1.300 4.400 0" stroke="#7a4a3a" stroke-width=".8" fill="none" opacity=".7"/>
    <path d="M20.800 15.800 19.300 18.600 21.500 17.800Z" fill="#11181a"/>
    <rect x="17.200" y="25.300" width="5" height="1.100" fill="#8a9498" opacity=".75"/>
  </g>
</svg>
<div class="t" style="left:56px;top:1034px;font-size:14px;-webkit-text-stroke:.38px #fff;letter-spacing:0.573px">John Henderson</div>
<div class="t" style="left:56px;top:1052px;font-size:12px;letter-spacing:0.323px">HQ Admin</div>
<svg class="ic" style="left:224px;top:1041px;width:16px;height:16px;color:#fff" viewBox="0 0 24 24"><path d="m7 15 5 5 5-5"/><path d="m7 9 5-5 5 5"/></svg>

</div>

<div id="ring"></div>
<div class="abs" style="left:0;top:3px;width:1px;height:1058px;background:rgba(150,170,230,.16);z-index:41"></div>
<svg class="abs" style="left:0;top:1058px;width:18px;height:22px;z-index:42" viewBox="0 1058 18 22"><path d="M0 1061Q1.500 1074 14.500 1080.500L0 1080.500Z" fill="#070c1e"/><path d="M.6 1063Q2 1074.500 12 1078.800" fill="none" stroke="rgba(70,100,170,.42)" stroke-width="1"/></svg>

<!-- ================= POPOVER ================= -->
<div id="pop">
<div class="abs" style="left:-4.25px;top:99px;width:8.5px;height:8.5px;background:#fff;transform:rotate(45deg)"></div>
<div class="t" style="left:17px;top:19px;font-size:14px;line-height:16px;-webkit-text-stroke:.48px #0a0a0a;color:#0a0a0a;letter-spacing:0.561px">Your Navigation Hub</div>
<svg class="ic" style="left:283px;top:21px;width:16px;height:16px;color:#404040;stroke-width:1.8" viewBox="0 0 24 24"><path d="M18 6 6 18"/><path d="m6 6 12 12"/></svg>
<div class="t" style="left:17px;top:54px;font-size:12px;line-height:14px;color:#737373;letter-spacing:-0.166px">Step 1 of 11</div>
<div class="abs" style="left:91px;top:58px;width:212px;height:6px;border-radius:3px;background:#f3f3f3"></div>
<div class="abs" style="left:91px;top:58px;width:20px;height:6px;border-radius:3px;background:#1c3cb3"></div>
<div class="t" style="left:17px;top:83px;font-size:14px;line-height:16px;color:#171717;letter-spacing:0.428px">Access all your tools and features from this</div>
<div class="t" style="left:17px;top:103px;font-size:14px;line-height:16px;color:#171717;letter-spacing:0.388px">main sidebar. Everything you need is</div>
<div class="t" style="left:17px;top:123px;font-size:14px;line-height:16px;color:#171717;letter-spacing:0.443px">organized here for quick access.</div>
<div class="abs" style="left:17px;top:157px;width:95px;height:32px;border:1px solid #ececec;border-radius:3px;background:#fff"></div>
<svg class="ic" style="left:29px;top:166px;width:14px;height:14px;color:#8c8c8c" viewBox="0 0 24 24"><path d="m15 18-6-6 6-6"/></svg>
<div class="t" style="left:52px;top:166px;font-size:12px;line-height:14px;color:#8c8c8c;letter-spacing:0.316px">Previous</div>
<div class="abs" style="left:232px;top:157px;width:71px;height:32px;border-radius:3px;background:#1c3cb3"></div>
<div class="t" style="left:242px;top:166px;font-size:12px;line-height:14px;color:#fff;letter-spacing:0.571px">Next</div>
<svg class="ic" style="left:278px;top:166px;width:14px;height:14px;color:#fff" viewBox="0 0 24 24"><path d="m9 18 6-6-6-6"/></svg>

</div>

</body>
</html>
